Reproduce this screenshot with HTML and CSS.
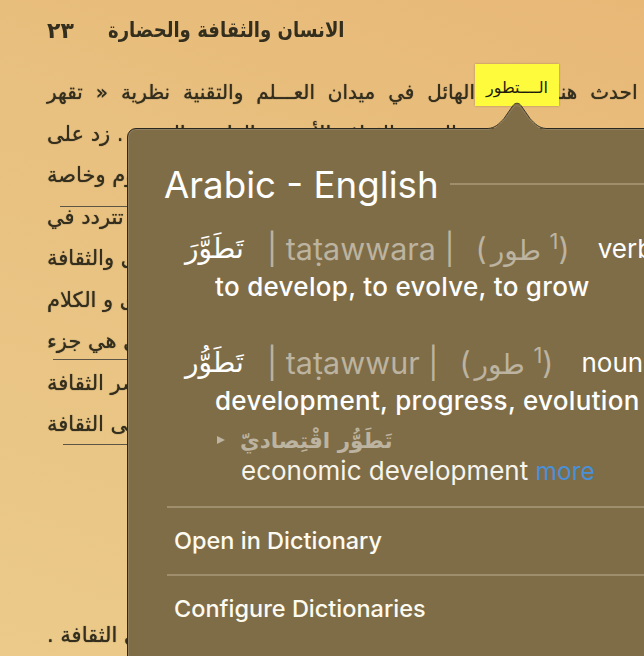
FILE: index.html
```html
<!DOCTYPE html>
<html lang="en">
<head>
    <meta charset="UTF-8">
    <title>Arabic - English</title>
    <link rel="stylesheet" href="styles.css">
</head>
<body>
<div class="page">
    <!-- scanned book page -->
    <div class="book">
        <div class="book-head"><span class="num">٢٣</span><span class="title" dir="rtl">الانسان والثقافة والحضارة</span></div>
        <div class="line wide"><bdi>لقد احدث هنا التطور الهائل في ميدان العـــلم والتقنية نظرية « تقهر</bdi></div>
        <div class="line"><bdi>الدين والثقافة الأخرى والعلوم والفنون . زد على</bdi></div>
        <div class="line"><bdi>الدين والثقافة الأخرى والعلوم وخاصة</bdi></div>
        <div class="line pen-a"><bdi>الدين والثقافة الأخرى تتردد في</bdi></div>
        <div class="line"><bdi>الدين والثقافة الأخرى والثقافة</bdi></div>
        <div class="line"><bdi>الدين والثقافة الأخرى و الكلام</bdi></div>
        <div class="line pen-b"><bdi>الدين والثقافة الأخرى هي جزء</bdi></div>
        <div class="line"><bdi>الدين والأخرى عنصر الثقافة</bdi></div>
        <div class="line pen-c"><bdi>الدين والأخرى على الثقافة</bdi></div>
        <div class="line last"><bdi>الدين والأخرى الثقافة .</bdi></div>
    </div>

    <div class="tip" dir="rtl">الــــتطور</div>

    <div class="popup">
        <div class="popup-head">
            <h1>Arabic - English</h1>
            <span class="rule"></span>
        </div>

        <div class="entry first">
            <div class="head-row">
                <span class="ar">تَطَوَّرَ</span>
                <span class="gray">| taṭawwara |</span>
                <span class="gray root">(<bdi>طور</bdi> <sup>1</sup>)</span>
                <span class="pos">verb</span>
            </div>
            <div class="def">to develop, to evolve, to grow</div>
        </div>

        <div class="entry second">
            <div class="head-row">
                <span class="ar">تَطَوُّر</span>
                <span class="gray">| taṭawwur |</span>
                <span class="gray root">(<bdi>طور</bdi> <sup>1</sup>)</span>
                <span class="pos">noun</span>
            </div>
            <div class="def">development, progress, evolution</div>
            <div class="sub-row">
                <span class="arrow"></span>
                <span class="sub-ar">تَطَوُّر اقْتِصاديّ</span>
            </div>
            <div class="sub-def">economic development <a class="more" href="#">more</a></div>
        </div>

        <div class="action top">Open in Dictionary</div>
        <div class="action">Configure Dictionaries</div>
    </div>

    <svg class="notch" width="80" height="32" viewBox="0 0 80 32">
        <path class="notch-fill" d="M11 31 C18 30 22 26 27 20 L36 7 C38 4 42 4 44 7 L53 20 C58 26 62 30 69 31 Z"/>
        <path class="notch-inner" d="M11 30 C18 29 22 26 27 21 L36 9 C38 6 42 6 44 9 L53 21 C58 26 62 29 69 30"/>
        <path class="notch-line" d="M11 29.500 C18 29 22 25 27 19.500 L36 6.500 C38 3.500 42 3.500 44 6.500 L53 19.500 C58 25 62 29 69 29.500"/>
    </svg>
</div>
</body>
</html>
```

FILE: styles.css
```css
*{
    margin:0;
    padding:0;
    box-sizing:border-box;
}
body{
    width:644px;
    height:656px;
    overflow:hidden;
}
.page{
    position:relative;
    width:644px;
    height:656px;
    overflow:hidden;
    background:linear-gradient(200deg,#e8b877 0%,#e8c07f 35%,#ebca8a 100%);
    font-family:Inter,"Noto Sans",sans-serif;
}

/* book */
.book{
    padding:12px 0 0 47px;
    font-family:"DejaVu Sans",sans-serif;
    color:#332e1e;
    filter:blur(.6px);
}
.book-head{
    display:flex;
    align-items:center;
    height:36px;
    gap:34px;
    font-weight:bold;
}
.book-head .num{
    font-size:22px;
}
.book-head .title{
    font-size:21px;
    white-space:nowrap;
    transform:scaleX(.86);
    transform-origin:left center;
}
.line{
    height:41.500px;
    line-height:41.500px;
    font-size:21px;
    white-space:nowrap;
    background-repeat:no-repeat;
    text-shadow:0 0 1px #332e1e;
}
.line.wide{
    margin-top:24px;
    word-spacing:6.500px;
    font-size:20px;
}
.line.pen-a,.line.pen-b,.line.pen-c{
    background-image:linear-gradient(#5c5546,#5c5546);
    background-size:100% 1px;
}
.line.pen-a{
    background-position:13px 9px;
}
.line.pen-b{
    background-position:6px 38px;
}
.line.pen-c{
    background-position:16px 40px;
}
.line.last{
    margin-top:169px;
}

/* tooltip */
.tip{
    position:absolute;
    left:475px;
    top:64px;
    width:84px;
    height:42px;
    background:#fdfb3b;
    box-shadow:0 0 2px rgba(90,70,30,.4);
    color:#1c1a0a;
    font-family:"DejaVu Sans",sans-serif;
    font-size:16px;
    line-height:47px;
    text-align:center;
}

/* popup */
.popup{
    position:absolute;
    left:127px;
    top:128px;
    width:560px;
    height:570px;
    padding-left:37px;
    background:#7f6d47;
    border:1px solid #2b281f;
    border-radius:9px;
    box-shadow:inset 0 0 0 1px #8f8060;
    color:#fff;
    white-space:nowrap;
}
.popup-head{
    display:flex;
    align-items:center;
    gap:11px;
    height:56px;
    margin-top:27px;
    margin-bottom:18px;
    margin-left:-1px;
}
.popup-head h1{
    font-size:36.700px;
    font-weight:400;
    color:#fff;
}
.rule{
    flex:1;
    height:2px;
    background:#9f8e6c;
}
.entry{
    padding-left:20px;
}
.head-row{
    display:flex;
    align-items:center;
    height:36px;
}
.ar{
    width:82px;
    font-family:"DejaVu Sans",sans-serif;
    font-size:28px;
    direction:rtl;
    text-align:left;
}
.gray{
    color:#bcb3a0;
    font-size:30.500px;
}
.root{
    margin-left:21px;
}
.root bdi{
    margin-left:4px;
    font-family:"DejaVu Sans",sans-serif;
    font-size:28px;
}
.root sup{
    font-size:22px;
    line-height:0;
}
.pos{
    margin-left:28px;
    font-size:26px;
}
.def{
    margin-top:6px;
    padding-left:30px;
    font-size:26px;
    font-weight:550;
    letter-spacing:.3px;
    line-height:30px;
}
.entry.second{
    margin-top:42px;
}
.sub-row{
    display:flex;
    align-items:center;
    height:36px;
    padding-left:32px;
    margin-top:6px;
}
.arrow{
    width:0;
    height:0;
    margin-right:15px;
    border-left:8px solid #bcb3a0;
    border-top:4px solid transparent;
    border-bottom:4px solid transparent;
}
.sub-ar{
    color:#bcb3a0;
    font-family:"DejaVu Sans",sans-serif;
    font-size:21.500px;
    font-weight:bold;
    direction:rtl;
}
.sub-def{
    margin-top:1px;
    padding-left:56px;
    font-size:26px;
    line-height:24px;
    color:#f7f4ec;
}
.more{
    color:#4a90d9;
    font-size:24.500px;
    text-decoration:none;
}
.action{
    height:68px;
    margin-left:2px;
    padding-left:7px;
    border-top:2px solid #9f8e6c;
    font-size:23.500px;
    font-weight:500;
    line-height:66px;
    color:#fdfaf0;
}
.action.top{
    margin-top:23px;
}

/* nub that joins popup and tooltip */
.notch{
    position:absolute;
    left:477px;
    top:99px;
}
.notch-fill{
    fill:#7f6d47;
}
.notch-inner{
    fill:none;
    stroke:#8f8060;
    stroke-width:1;
}
.notch-line{
    fill:none;
    stroke:#3a3526;
    stroke-width:1;
}
```
